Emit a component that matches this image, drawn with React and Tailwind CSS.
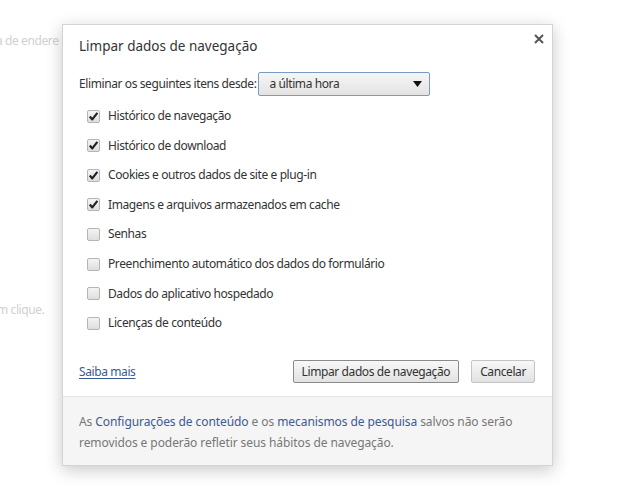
import React, { useState } from 'react';

const items = [
  { label: 'Histórico de navegação', checked: true },
  { label: 'Histórico de download', checked: true },
  { label: 'Cookies e outros dados de site e plug-in', checked: true },
  { label: 'Imagens e arquivos armazenados em cache', checked: true },
  { label: 'Senhas', checked: false },
  { label: 'Preenchimento automático dos dados do formulário', checked: false },
  { label: 'Dados do aplicativo hospedado', checked: false },
  { label: 'Licenças de conteúdo', checked: false },
];

function Checkbox({ checked, onClick }) {
  return (
    <button
      onClick={onClick}
      className="w-[13px] h-[13px] rounded-[2px] border border-[#b5b5b5] bg-gradient-to-b from-[#f4f4f4] to-[#dedede] flex items-center justify-center"
    >
      {checked && (
        <svg width="11" height="11" viewBox="0 0 11 11">
          <path d="M1.8 5.6 L4.3 8.4 L9.4 1.8" fill="none" stroke="#222" strokeWidth="2.2" strokeLinejoin="round" />
        </svg>
      )}
    </button>
  );
}

export default function App() {
  const [checks, setChecks] = useState(items.map((i) => i.checked));

  return (
    <div className="relative w-[621px] h-[500px] bg-white overflow-hidden font-['Noto_Sans','Open_Sans',sans-serif] text-[#333]">
      {/* faded page behind */}
      <div className="absolute left-[-4px] top-[32px] text-[12px] text-[#d0d0d0] tracking-[-0.4px]">a de endere</div>
      <div className="absolute left-[-3px] top-[301px] text-[12px] text-[#d0d0d0] tracking-[-0.4px]">m clique.</div>

      {/* dialog */}
      <div className="absolute left-[62px] top-[24px] w-[491px] h-[442px] bg-white border border-[#d4d4d4] shadow-[0_4px_16px_rgba(0,0,0,0.22)] flex flex-col">
        <div className="flex-1 flex flex-col px-[16px] pt-[11px] text-[12px] tracking-[-0.4px]">
          <div className="flex items-start justify-between">
            <h1 className="text-[13.5px] text-[#333] tracking-[0px]">Limpar dados de navegação</h1>
            <button className="mt-[-2px] mr-[-8px] text-[#555]">
              <svg width="10" height="10" viewBox="0 0 10 10">
                <path d="M1 1 L9 9 M9 1 L1 9" stroke="#555" strokeWidth="2" />
              </svg>
            </button>
          </div>

          <div className="flex items-center mt-[16px]">
            <span>Eliminar os seguintes itens desde:</span>
            <div className="ml-[2px] w-[172px] h-[24px] border border-[#7a9cc2] rounded-[2px] bg-gradient-to-b from-[#f6f6f6] to-[#e3e3e3] flex items-center justify-between pl-[10px] pr-[7px]">
              <span>a última hora</span>
              <svg width="9" height="6" viewBox="0 0 9 6">
                <path d="M0 0 H9 L4.5 6 Z" fill="#111" />
              </svg>
            </div>
          </div>

          <div className="flex flex-col mt-[5px] ml-[8px]">
            {items.map((item, i) => (
              <div key={item.label} className="flex items-center gap-[8px] h-[29.6px]">
                <Checkbox
                  checked={checks[i]}
                  onClick={() => setChecks(checks.map((c, j) => (j === i ? !c : c)))}
                />
                <span>{item.label}</span>
              </div>
            ))}
          </div>

          <div className="flex items-center justify-between mt-[22px]">
            <a className="text-[#3a5b94] underline underline-offset-2">Saiba mais</a>
            <div className="flex gap-[12px] mr-[1px]">
              <button className="h-[23px] px-[8px] border border-[#8a8a8a] rounded-[2px] bg-gradient-to-b from-[#f8f8f8] to-[#e2e2e2] text-[#333]">
                Limpar dados de navegação
              </button>
              <button className="h-[23px] px-[8px] border border-[#c4c4c4] rounded-[2px] bg-gradient-to-b from-[#f8f8f8] to-[#e2e2e2] text-[#333]">
                Cancelar
              </button>
            </div>
          </div>
        </div>

        <div className="h-[69px] bg-[#f5f5f5] border-t border-[#e4e4e4] px-[16px] pt-[14px] text-[12px] leading-[21px] text-[#777] tracking-[-0.08px]">
          <p>
            As <span className="text-[#3a5b94]">Configurações de conteúdo</span> e os{' '}
            <span className="text-[#3a5b94]">mecanismos de pesquisa</span> salvos não serão
          </p>
          <p>removidos e poderão refletir seus hábitos de navegação.</p>
        </div>
      </div>
    </div>
  );
}
